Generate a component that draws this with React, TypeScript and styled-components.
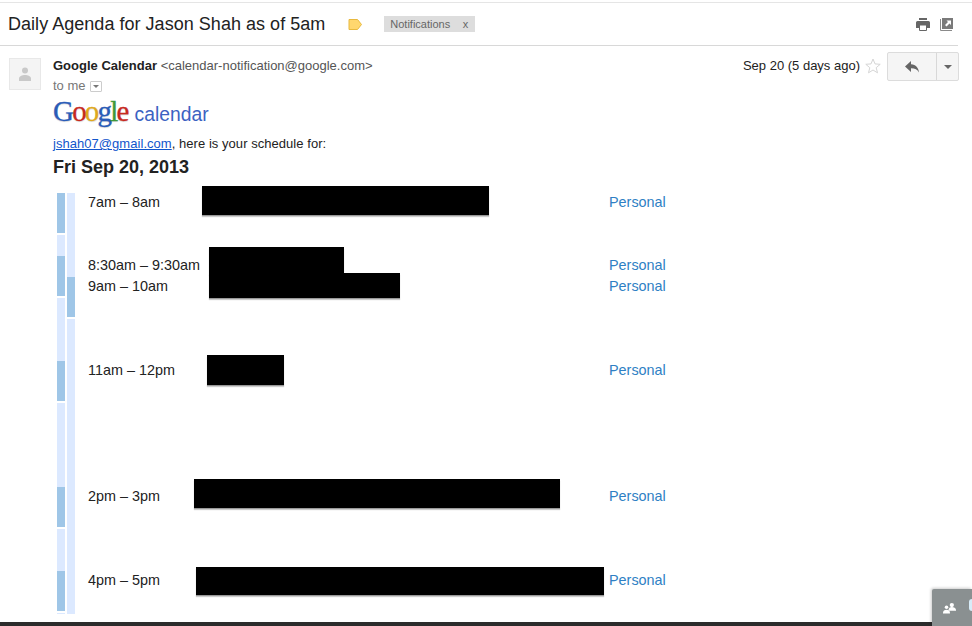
import styled, { createGlobalStyle } from "styled-components";

const HOUR = 42;

const agenda = [
  { start: 7, time: "7am – 8am", hide: [{ left: 114, top: -6, width: 287, height: 29 }] },
  { start: 8.5, time: "8:30am – 9:30am", hide: [{ left: 121, top: -8, width: 135, height: 27 }] },
  { start: 9, time: "9am – 10am", hide: [{ left: 121, top: -3, width: 191, height: 25 }] },
  { start: 11, time: "11am – 12pm", hide: [{ left: 119, top: -5, width: 77, height: 30 }] },
  { start: 14, time: "2pm – 3pm", hide: [{ left: 106, top: -7, width: 366, height: 29 }] },
  { start: 16, time: "4pm – 5pm", hide: [{ left: 108, top: -3, width: 408, height: 28 }] },
];

const leftSlots = [0, 21, 63, 84, 42];
const logoLetters = [
  { c: "G", color: "#2a5cb8" },
  { c: "o", color: "#c8291f" },
  { c: "o", color: "#e0a91b" },
  { c: "g", color: "#2a5cb8" },
  { c: "l", color: "#3f9a3a" },
  { c: "e", color: "#c8291f" },
];

const App = () => {
  return (
    <Page>
      <GlobalStyle />
      <TopRule />
      <SubjectBar>
        <Subject>Daily Agenda for Jason Shah as of 5am</Subject>
        <LabelMark viewBox="0 0 14 11" width="14" height="11">
          <path d="M1 .5h8.5L13.5 5.5 9.5 10.5H1z" fill="#ffd76e" stroke="#e8b93f" />
        </LabelMark>
        <Chip>
          Notifications<ChipClose>x</ChipClose>
        </Chip>
        <SubjectTools>
          <svg viewBox="0 0 14 13" width="14" height="13">
            <path d="M3 0h8v2H3z" fill="#666" />
            <path d="M1.500 3h11A1.500 1.500 0 0 1 14 4.500V10H0V4.500A1.500 1.500 0 0 1 1.500 3z" fill="#666" />
            <path d="M3.500 7h7v5.500h-7z" fill="#fff" stroke="#666" />
          </svg>
          <svg viewBox="0 0 13 13" width="13" height="13">
            <path d="M2 0h11v11H2z" fill="#7a7a7a" />
            <path d="M.5 1v11.500H12" fill="none" stroke="#8a8a8a" />
            <path d="M6.500 2.500h4.500V7L9.500 5.500 6.500 8.500 5 7 8 4z" fill="#fff" />
          </svg>
        </SubjectTools>
      </SubjectBar>

      <MessageHead>
        <Avatar>
          <svg viewBox="0 0 14 14" width="14" height="14">
            <circle cx="7" cy="3.600" r="3" fill="#c9c9c9" />
            <path d="M1 14v-2.500C1 9.500 4 8 7 8s6 1.500 6 3.500V14z" fill="#c9c9c9" />
          </svg>
        </Avatar>
        <Sender>
          <SenderLine>
            <b>Google Calendar</b> <SenderMail>&lt;calendar-notification@google.com&gt;</SenderMail>
          </SenderLine>
          <ToLine>
            to me
            <DetailsToggle />
          </ToLine>
        </Sender>
        <MessageDate>Sep 20 (5 days ago)</MessageDate>
        <Star viewBox="0 0 16 16" width="16" height="16">
          <path d="M8 1l2 4.900 5.200.4-4 3.400 1.300 5.100L8 12l-4.500 2.800 1.300-5.100-4-3.400L6 5.900z" fill="none" stroke="#d5d5d5" />
        </Star>
        <ReplyGroup>
          <ReplyMain>
            <svg viewBox="0 0 14 12" width="14" height="12">
              <path d="M6 0v3.200c5 .3 7.500 3.500 8 8.300-1.500-3-4-4.300-8-4.300V11L0 5.500z" fill="#666" />
            </svg>
          </ReplyMain>
          <ReplyMore />
        </ReplyGroup>
      </MessageHead>

      <Body>
        <Logo>
          <LogoWord>
            {logoLetters.map((l, i) => (
              <LogoLetter key={i} $color={l.color}>
                {l.c}
              </LogoLetter>
            ))}
          </LogoWord>
          <LogoProduct>calendar</LogoProduct>
        </Logo>
        <Intro>
          <a href="#">jshah07@gmail.com</a>, here is your schedule for:
        </Intro>
        <DayTitle>Fri Sep 20, 2013</DayTitle>
        <Agenda>
          <Timeline>
            <TimeColumn>
              {leftSlots.map((lead, i) => (
                <Slot key={i}>
                  {lead > 0 && <Segment $height={lead} />}
                  <Segment $height={40} $busy />
                </Slot>
              ))}
              <Slot>
                <Segment $height={1} />
              </Slot>
            </TimeColumn>
            <TimeColumn>
              <Slot>
                <Segment $height={84} />
                <Segment $height={40} $busy />
              </Slot>
              <Slot>
                <Segment $height={295} />
              </Slot>
            </TimeColumn>
          </Timeline>
          <Rows>
            {agenda.map((row, i) => {
              const prev = i > 0 ? agenda[i - 1].start : 7;
              const gap = i > 0 ? (row.start - prev) * HOUR - 21 : 0;
              return (
                <Row key={row.time} $gap={gap}>
                  <When>{row.time}</When>
                  <Cal>Personal</Cal>
                  {row.hide.map((h, j) => (
                    <Redaction key={j} $left={h.left} $top={h.top} $width={h.width} $height={h.height} />
                  ))}
                </Row>
              );
            })}
          </Rows>
        </Agenda>
      </Body>

      <BottomEdge />
      <ChatTab>
        <svg viewBox="0 0 14 12" width="13" height="12">
          <circle cx="9.500" cy="2.800" r="2.300" fill="#fff" />
          <path d="M6 8c0-1.800 1.500-3 3.500-3S14 6.200 14 8v1H6z" fill="#fff" />
          <circle cx="3.800" cy="5.200" r="1.900" fill="#fff" />
          <path d="M0 11c0-2 1.600-3.200 3.800-3.200S7.500 9 7.500 11v1H0z" fill="#fff" />
        </svg>
        <ChatDot />
      </ChatTab>
    </Page>
  );
};

export default App;

const GlobalStyle = createGlobalStyle`
  html, body {
    margin: 0;
    padding: 0;
    background: #fff;
  }
  body {
    font-family: "Liberation Sans", Arial, sans-serif;
    color: #222;
    overflow: hidden;
  }
`;

const Page = styled.div`
  position: relative;
  width: 972px;
  height: 626px;
  overflow: hidden;
  box-sizing: border-box;
  padding-top: 2px;
  background: #fff;
`;

const TopRule = styled.div`
  height: 1px;
  background: #e5e5e5;
`;

const SubjectBar = styled.div`
  display: flex;
  align-items: center;
  height: 42px;
  width: 950px;
  padding-left: 8px;
  border-bottom: 1px solid #d8d8d8;
`;

const Subject = styled.h1`
  margin: 0;
  font-size: 18px;
  font-weight: 400;
  letter-spacing: 0.03px;
  color: #222;
  white-space: nowrap;
`;

const LabelMark = styled.svg`
  margin-left: 23px;
`;

const Chip = styled.div`
  display: flex;
  justify-content: space-between;
  align-items: center;
  width: 91px;
  height: 16px;
  margin-left: 22px;
  padding: 0 7px 0 6px;
  box-sizing: border-box;
  background: #dddddd;
  color: #666;
  font-size: 11px;
`;

const ChipClose = styled.span`
  font-size: 11px;
`;

const SubjectTools = styled.div`
  display: flex;
  align-items: center;
  gap: 10px;
  margin-left: auto;
  margin-right: 5px;
`;

const MessageHead = styled.div`
  display: flex;
  align-items: flex-start;
  height: 37px;
  padding: 12px 13px 0 9px;
`;

const Avatar = styled.div`
  display: flex;
  align-items: center;
  justify-content: center;
  width: 32px;
  height: 32px;
  box-sizing: border-box;
  background: #f4f4f4;
  border: 1px solid #e8e8e8;
  flex: none;
`;

const Sender = styled.div`
  margin-left: 12px;
  flex: 1;
`;

const SenderLine = styled.div`
  font-size: 13px;
  line-height: 16px;
  color: #222;
`;

const SenderMail = styled.span`
  color: #555;
`;

const ToLine = styled.div`
  display: flex;
  align-items: center;
  margin-top: 4px;
  font-size: 13px;
  line-height: 16px;
  color: #777;
`;

const DetailsToggle = styled.span`
  position: relative;
  width: 12px;
  height: 11px;
  margin-left: 4px;
  box-sizing: border-box;
  border: 1px solid #ccc;
  border-radius: 1px;

  &::after {
    content: "";
    position: absolute;
    left: 2px;
    top: 3px;
    border: 3px solid transparent;
    border-top-color: #777;
    border-bottom: 0;
  }
`;

const MessageDate = styled.div`
  font-size: 13px;
  line-height: 16px;
  color: #222;
`;

const Star = styled.svg`
  margin: 0 6px 0 5px;
  flex: none;
`;

const ReplyGroup = styled.div`
  display: flex;
  width: 72px;
  height: 29px;
  margin-top: -6px;
  box-sizing: border-box;
  background: #f5f5f5;
  border: 1px solid #dcdcdc;
  border-radius: 2px;
`;

const ReplyMain = styled.div`
  display: flex;
  align-items: center;
  justify-content: center;
  width: 48px;
  border-right: 1px solid #d8d8d8;
`;

const ReplyMore = styled.div`
  flex: 1;
  position: relative;

  &::after {
    content: "";
    position: absolute;
    left: 7px;
    top: 12px;
    border: 4px solid transparent;
    border-top-color: #666;
    border-bottom: 0;
  }
`;

const Body = styled.div`
  padding-left: 53px;
`;

const Logo = styled.div`
  display: flex;
  align-items: baseline;
  height: 33px;
`;

const LogoWord = styled.div`
  font-family: "Liberation Serif", "Times New Roman", serif;
  font-size: 29px;
  line-height: 32px;
  letter-spacing: -1.800px;
  -webkit-text-stroke: 0.3px;
  text-shadow: 0 1px 1px rgba(0, 0, 0, 0.15);
`;

const LogoLetter = styled.span<{ $color: string }>`
  color: ${(p) => p.$color};
`;

const LogoProduct = styled.div`
  margin-left: 7px;
  font-size: 19.300px;
  color: #3c62c2;
`;

const Intro = styled.div`
  margin-top: 8px;
  font-size: 13px;
  line-height: 16px;
  letter-spacing: 0.045px;
  color: #222;

  a {
    color: #1155cc;
  }
`;

const DayTitle = styled.div`
  margin-top: 5px;
  font-size: 18px;
  line-height: 20px;
  font-weight: 700;
  color: #222;
`;

const Agenda = styled.div`
  display: flex;
  gap: 13px;
  margin-top: 15px;
  padding-left: 4px;
`;

const Timeline = styled.div`
  display: flex;
  gap: 2px;
  margin-top: 1px;
`;

const TimeColumn = styled.div`
  display: flex;
  flex-direction: column;
  gap: 2px;
  width: 8px;
`;

const Slot = styled.div`
  display: flex;
  flex-direction: column;
`;

const Segment = styled.div<{ $height: number; $busy?: boolean }>`
  height: ${(p) => p.$height}px;
  background: ${(p) => (p.$busy ? "#9fc6e7" : "#dce9ff")};
`;

const Rows = styled.div`
  display: flex;
  flex-direction: column;
`;

const Row = styled.div<{ $gap: number }>`
  position: relative;
  display: grid;
  grid-template-columns: 521px auto;
  height: 21px;
  margin-top: ${(p) => p.$gap}px;
  align-items: start;
  font-size: 14.400px;
  line-height: 20px;
`;

const When = styled.div`
  color: #222;
  white-space: nowrap;
`;

const Cal = styled.div`
  color: #2f7fc4;
  white-space: nowrap;
`;

const Redaction = styled.div<{ $left: number; $top: number; $width: number; $height: number }>`
  position: absolute;
  left: ${(p) => p.$left}px;
  top: ${(p) => p.$top}px;
  width: ${(p) => p.$width}px;
  height: ${(p) => p.$height}px;
  background: #000;
  box-shadow: 0 1px 0 #999, 0 2px 1px #ccc;
`;

const ChatTab = styled.div`
  position: absolute;
  right: 0;
  bottom: 0;
  width: 40px;
  height: 37px;
  background: #8a9091;
  display: flex;
  align-items: center;
  padding-left: 11px;
  box-sizing: border-box;
  box-shadow: -1px -1px 3px rgba(0, 0, 0, 0.2);
  border-top-left-radius: 2px;
`;

const ChatDot = styled.span`
  position: absolute;
  right: 0;
  top: 10px;
  width: 3px;
  height: 12px;
  background: #d8ecf8;
  border-radius: 3px 0 0 3px;
`;

const BottomEdge = styled.div`
  position: absolute;
  left: 0;
  right: 0;
  bottom: 0;
  height: 4px;
  background: #2b2b2b;
`;
